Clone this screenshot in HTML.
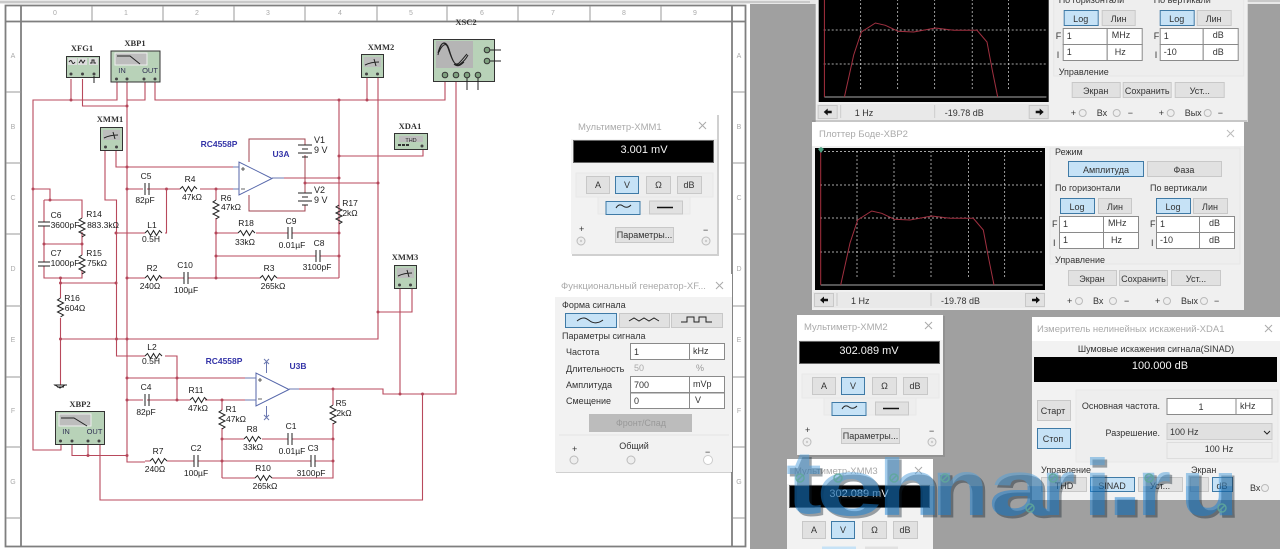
<!DOCTYPE html>
<html><head><meta charset="utf-8"><title>Multisim</title>
<style>
html,body{margin:0;padding:0;background:#a0a0a0;width:1280px;height:549px;overflow:hidden}
svg{display:block;filter:blur(.35px);width:1280px;height:549px;overflow:hidden}
text{font-family:"Liberation Sans","DejaVu Sans",sans-serif;fill:#222}
.w{fill:none;stroke:#b8495c;stroke-width:1.1}
.k{fill:none;stroke:#222;stroke-width:1}
.l{font-size:8.5px;text-anchor:middle;fill:#1a1a1a}
.n{font-family:"Liberation Serif",serif;font-size:8.5px;font-weight:bold;text-anchor:middle;fill:#333}
.b{font-size:8.5px;font-weight:bold;fill:#3434a8;text-anchor:middle}
.d{fill:#b5475a}
.ins{fill:#b8d2b8;stroke:#333;stroke-width:1}
.scr{fill:#bdbdbd}
.p{font-size:9px;fill:#333}
.t{font-size:9.5px;fill:#aaa}
.c{text-anchor:middle}
.btn{fill:#e1e1e1;stroke:#c8c8c8}
.on{fill:#c6e2f6;stroke:#3f7aa6}
.fld{fill:#fff;stroke:#8a8a8a}
.tick{font-size:7px;fill:#aaa;text-anchor:middle}
.g{stroke:#ddd;stroke-width:.7;stroke-dasharray:2 2;fill:none}
.term{fill:#eee;stroke:#bbb}
.wm{font-size:80px;font-weight:bold}
</style></head>
<body>
<svg width="1280" height="549" viewBox="0 0 1280 549" xmlns="http://www.w3.org/2000/svg">
<defs>
<linearGradient id="wg" gradientUnits="userSpaceOnUse" x1="0" y1="450" x2="0" y2="515">
  <stop offset="0" stop-color="#4f9fdc"/><stop offset=".55" stop-color="#4f9fdc"/><stop offset=".56" stop-color="#1680d5"/><stop offset="1" stop-color="#1680d5"/>
</linearGradient>
<g id="rh"><path class="k" d="M0 0l2.500-2.500 3 5 3-5 3 5 3-5 2.500 2.500" stroke-width=".8"/></g>
<g id="rv"><path class="k" d="M0 0l-3 2 6 3-6 3 6 3-6 3 6 3-3 2"/></g>
<g id="ch"><path class="k" stroke-width="1.300" d="M-2 -6v12M2 -6v12"/></g>
<g id="cv"><path class="k" stroke-width="1.300" d="M-6 -2h12M-6 2h12"/></g>
<g id="bat"><path class="k" d="M-7 0h14M-3 4h6M-7 8h14M-3 12h6"/></g>
<g id="mm">
  <rect x="1" y="1" width="147" height="141" fill="#777" opacity=".35"/>
  <rect x="0" y="0" width="146" height="140" fill="#f2f2f2"/>
  <rect x="0" y="0" width="146" height="25" fill="#fff"/>
  <rect x="2.500" y="26.500" width="140" height="22" fill="#000" stroke="#666"/>
  <rect x="5" y="59" width="137" height="24" fill="#eeeeee" stroke="#e8e8e8"/>
  <rect x="27" y="83" width="92" height="17" fill="#eeeeee" stroke="#e8e8e8"/>
  <rect class="btn" x="15.500" y="62.500" width="23" height="17"/>
  <rect class="on" x="44.500" y="62.500" width="23" height="17"/>
  <rect class="btn" x="75.500" y="62.500" width="24" height="17"/>
  <rect class="btn" x="106.500" y="62.500" width="24" height="17"/>
  <text class="p c" x="27" y="74">A</text><text class="p c" x="56" y="74">V</text><text class="p c" x="87.500" y="74">Ω</text><text class="p c" x="118" y="74">dB</text>
  <rect class="on" x="35" y="87.500" width="34" height="13"/>
  <rect class="btn" x="78.500" y="87" width="33" height="13"/>
  <path class="k" d="M45 94q3-5 7-2t8-1"/>
  <path d="M86 93.500h16" stroke="#111" stroke-width="1.500"/>
  <rect class="btn" x="44.500" y="113.500" width="58" height="15"/>
  <text class="p c" x="73.500" y="124">Параметры...</text>
  <text class="p" x="8" y="118">+</text><text class="p" x="132" y="119">−</text>
  <circle class="term" cx="10" cy="127" r="4"/><circle class="term" cx="135" cy="127" r="4"/>
  <circle cx="10" cy="127" r="1.200" fill="#ccc"/><circle cx="135" cy="127" r="1.200" fill="#ccc"/>
</g>
<g id="bode">
  <rect x="0" y="0" width="432" height="188" fill="#f0f0f0"/>
  <rect x="0" y="0" width="432" height="24" fill="#fff"/>
  <rect x="3" y="26" width="230" height="142" fill="#000"/>
  <path class="g" d="M45 29v127M82 29v127M119 29v127M156.500 29v127M192.700 29v127M8 29.600h223M8 63h223M8 96h223M8 130h223"/>
  <path d="M8.700 163h222" stroke="#aaa" stroke-width="1"/>
  <path d="M8.700 28v135" stroke="#a8303f" stroke-width="1"/>
  <path d="M28.700 163L38 121 45.700 98 59.700 89 69.700 91.300 82.300 97.300 98 98 119.700 94 138 96.300 161.300 96.300 171.300 108 176.300 134.700 182 163" fill="none" stroke="#a03040"/>
  <rect x="1" y="170" width="232" height="16" fill="#e9e9e9"/>
  <rect class="btn" x="2.500" y="171.500" width="19" height="13"/>
  <rect class="btn" x="213.500" y="171.500" width="19" height="13"/>
  <path d="M8 178l4-3.500v2.200h4v2.600h-4v2.200zM228 178l-4-3.500v2.200h-4v2.600h4v2.200z" fill="#111"/>
  <path d="M25 171v13M119 171v13" stroke="#ccc"/>
  <text class="p" x="39" y="182">1  Hz</text>
  <text class="p" x="129" y="182">-19.78 dB</text>
  <rect x="238" y="26" width="190" height="116" fill="#eeeeee" stroke="#e6e6e6"/>
  <text class="p" x="243" y="33">Режим</text>
  <rect class="on" x="256.500" y="39.500" width="75" height="15"/>
  <rect class="btn" x="335.500" y="39.500" width="74" height="15"/>
  <text class="p c" x="294" y="51">Амплитуда</text><text class="p c" x="372" y="51">Фаза</text>
  <text class="p" x="243" y="69">По горизонтали</text><text class="p" x="338" y="69">По вертикали</text>
  <rect class="on" x="248.500" y="76.500" width="34" height="15"/><rect class="btn" x="286.500" y="76.500" width="33" height="15"/>
  <rect class="on" x="344.500" y="76.500" width="34" height="15"/><rect class="btn" x="381.500" y="76.500" width="34" height="15"/>
  <text class="p c" x="265" y="88">Log</text><text class="p c" x="303" y="88">Лин</text><text class="p c" x="361" y="88">Log</text><text class="p c" x="398" y="88">Лин</text>
  <rect class="fld" x="247.500" y="94.500" width="44" height="16"/><rect class="fld" x="291.500" y="94.500" width="35" height="16"/>
  <rect class="fld" x="247.500" y="110.500" width="44" height="16"/><rect class="fld" x="291.500" y="110.500" width="35" height="16"/>
  <rect class="fld" x="344.500" y="94.500" width="43" height="16"/><rect class="fld" x="387.500" y="94.500" width="35" height="16"/>
  <rect class="fld" x="344.500" y="110.500" width="43" height="16"/><rect class="fld" x="387.500" y="110.500" width="35" height="16"/>
  <text class="p" x="240" y="105">F</text><text class="p" x="241" y="124">I</text><text class="p" x="338" y="105">F</text><text class="p" x="339" y="124">I</text>
  <text class="p" x="251" y="105">1</text><text class="p" x="296" y="104">MHz</text><text class="p" x="251" y="121">1</text><text class="p" x="299" y="121">Hz</text>
  <text class="p" x="348" y="105">1</text><text class="p" x="397" y="104">dB</text><text class="p" x="348" y="121">-10</text><text class="p" x="397" y="121">dB</text>
  <text class="p" x="243" y="141">Управление</text>
  <rect class="btn" x="256.500" y="148.500" width="48" height="15"/><rect class="btn" x="307.500" y="148.500" width="48" height="15"/><rect class="btn" x="359.500" y="148.500" width="49" height="15"/>
  <text class="p c" x="280" y="160">Экран</text><text class="p c" x="331.500" y="160">Сохранить</text><text class="p c" x="384" y="160">Уст...</text>
  <text class="p" x="255" y="182">+</text><text class="p" x="281" y="182">Вх</text><text class="p" x="312" y="182">−</text>
  <text class="p" x="343" y="182">+</text><text class="p" x="369" y="182">Вых</text><text class="p" x="402" y="182">−</text>
  <circle class="term" cx="267" cy="179" r="3.500"/><circle class="term" cx="301" cy="179" r="3.500"/><circle class="term" cx="355" cy="179" r="3.500"/><circle class="term" cx="392" cy="179" r="3.500"/>
</g>
<g id="mmi">
  <rect class="ins" x=".5" y=".5" width="22" height="23"/>
  <rect x="3" y="3" width="17" height="10" class="scr"/>
  <path class="k" d="M4 11q6-3 14-3M13 5l2 7"/>
  <circle cx="5.500" cy="20" r="1.500" fill="#444"/><circle cx="16.500" cy="20" r="1.500" fill="#444"/>
</g>
</defs>

<!-- sheet -->
<rect x="0" y="0" width="750" height="549" fill="#fff"/>
<rect x="0" y="0" width="1280" height="4" fill="#e8e8e8"/>
<path d="M0 2h810M1247 1h33" stroke="#aaa"/>
<path d="M5.500 5.500H745.500V546.500H5.500ZM21 6V546M732 6V546M6 21.500H745" fill="none" stroke="#7f7f7f" stroke-width="1.800"/>
<path d="M92 6v15M163 6v15M234 6v15M305 6v15M377 6v15M447 6v15M518 6v15M590 6v15M661 6v15M6 92h15M6 163h15M6 234h15M6 306h15M6 377h15M6 447h15M6 518h15M733 92h12M733 163h12M733 234h12M733 306h12M733 377h12M733 447h12M733 518h12" stroke="#999"/>
<g>
<text class="tick" x="55" y="15">0</text><text class="tick" x="126" y="15">1</text><text class="tick" x="197" y="15">2</text><text class="tick" x="268" y="15">3</text><text class="tick" x="340" y="15">4</text><text class="tick" x="411" y="15">5</text><text class="tick" x="482" y="15">6</text><text class="tick" x="553" y="15">7</text><text class="tick" x="624" y="15">8</text><text class="tick" x="695" y="15">9</text>
<text class="tick" x="13" y="58">A</text><text class="tick" x="13" y="129">B</text><text class="tick" x="13" y="200">C</text><text class="tick" x="13" y="271">D</text><text class="tick" x="13" y="342">E</text><text class="tick" x="13" y="413">F</text><text class="tick" x="13" y="484">G</text>
<text class="tick" x="739" y="58">A</text><text class="tick" x="739" y="129">B</text><text class="tick" x="739" y="200">C</text><text class="tick" x="739" y="271">D</text><text class="tick" x="739" y="342">E</text><text class="tick" x="739" y="413">F</text><text class="tick" x="739" y="484">G</text>
</g>

<!-- wires -->
<path class="w" d="M117 79V100H33V450H61V442M71 79V100M82.500 79V106H127M145 79V100H127M127 79V462H145M155 79V100H445V80M367 75V100M378 75V339H60M339 100V278M339 156H423V147M272 178H339M305 183H378M116 148V167H239M105 145V200H116.500V356H145M165 356H177V400M127 189H143M147 189H180M200 189H239M166.500 189V233H165M145 233H116M216 189V200M216 218V278M216 233H238M256 233H288M292 233H339M216 256H316M320 256H339M127 278H145M160 278H184M188 278H260M277 278H339M33 189H50V200M44 200H82V218M44 200V222M44 226V262M44 266V278H82V270M82 232V255M44 244H82M60.500 278V298M60 283H116M60.500 318V385M378 312H412V288M400 288V394M289 389H383V394H456V80M422.500 394V500H100V442M72 442V455.500H127M88 442V456M127 378H256M127 400H143M147 400H190M205 400H256M222 400V410M222 428V478M222 439H244M262 439H288M292 439H333M145 461H150M167 461H194M198 461H311M315 461H333M222 478H255M272 478H333V423M333 405V389"/>
<path d="M249 162V139H305V145M305 155V193M305 205V211H249V195" fill="none" stroke="#a0434f"/>
<g class="d">
<circle cx="71" cy="100" r="1.500"/><circle cx="127" cy="106" r="1.500"/><circle cx="339" cy="100" r="1.500"/><circle cx="367" cy="100" r="1.500"/><circle cx="127" cy="167" r="1.500"/><circle cx="127" cy="189" r="1.500"/><circle cx="166.500" cy="189" r="1.500"/><circle cx="216" cy="189" r="1.500"/><circle cx="339" cy="156" r="1.500"/><circle cx="339" cy="178" r="1.500"/><circle cx="305" cy="183" r="1.500"/><circle cx="378" cy="183" r="1.500"/><circle cx="216" cy="233" r="1.500"/><circle cx="339" cy="233" r="1.500"/><circle cx="216" cy="256" r="1.500"/><circle cx="339" cy="256" r="1.500"/><circle cx="216" cy="278" r="1.500"/><circle cx="127" cy="278" r="1.500"/><circle cx="116" cy="233" r="1.500"/><circle cx="116" cy="283" r="1.500"/><circle cx="33" cy="189" r="1.500"/><circle cx="50" cy="200" r="1.500"/><circle cx="44" cy="244" r="1.500"/><circle cx="82" cy="244" r="1.500"/><circle cx="60.500" cy="278" r="1.500"/><circle cx="60.500" cy="283" r="1.500"/><circle cx="60.500" cy="339" r="1.500"/><circle cx="116.500" cy="339" r="1.500"/><circle cx="127" cy="339" r="1.500"/><circle cx="378" cy="312" r="1.500"/><circle cx="127" cy="378" r="1.500"/><circle cx="127" cy="400" r="1.500"/><circle cx="177" cy="378" r="1.500"/><circle cx="177" cy="400" r="1.500"/><circle cx="222" cy="400" r="1.500"/><circle cx="333" cy="389" r="1.500"/><circle cx="222" cy="439" r="1.500"/><circle cx="333" cy="439" r="1.500"/><circle cx="222" cy="461" r="1.500"/><circle cx="333" cy="461" r="1.500"/><circle cx="88" cy="455.500" r="1.500"/><circle cx="127" cy="455.500" r="1.500"/><circle cx="400" cy="394" r="1.500"/><circle cx="422.500" cy="394" r="1.500"/>
</g>
<path d="M60 385h-5l5 3 5-3zM54 385h13M57 387h7" class="k"/>

<!-- passive parts -->
<use href="#rh" x="180" y="189"/><use href="#rh" x="145" y="233"/><use href="#rh" x="238" y="233"/><use href="#rh" x="145" y="278"/><use href="#rh" x="260" y="278"/><use href="#rh" x="145" y="356"/><use href="#rh" x="190" y="400"/><use href="#rh" x="244" y="439"/><use href="#rh" x="150" y="461"/><use href="#rh" x="255" y="478"/>
<use href="#rv" x="216" y="200"/><use href="#rv" x="339" y="205"/><use href="#rv" x="82" y="218"/><use href="#rv" x="82" y="255"/><use href="#rv" x="60.500" y="298"/><use href="#rv" x="222" y="410"/><use href="#rv" x="333" y="405"/>
<use href="#ch" x="147" y="189"/><use href="#ch" x="290" y="233"/><use href="#ch" x="318" y="256"/><use href="#ch" x="186" y="278"/><use href="#ch" x="147" y="400"/><use href="#ch" x="290" y="439"/><use href="#ch" x="196" y="461"/><use href="#ch" x="313" y="461"/>
<use href="#cv" x="44" y="224"/><use href="#cv" x="44" y="264"/>
<use href="#bat" x="305" y="145"/><use href="#bat" x="305" y="193"/>

<!-- op amps -->
<path d="M239 162V195L272 178.500ZM256 373V406L289 389.500Z" fill="#fff" stroke="#5566aa"/>
<path d="M241 169h4M243 167v4M241 189h4M258 380h4M260 378v4M258 399h4" stroke="#333" fill="none" stroke-width=".8"/>
<path d="M272 178h12M289 389h10M233 167h6M233 189h6M245 378h11M245 400h11" stroke="#6b78b0" fill="none"/>
<path d="M266.500 373V362M266.500 406V418M264 359l5 5m0-5l-5 5M264 415l5 5m0-5l-5 5" stroke="#6b78b0" fill="none"/>

<!-- instruments -->
<rect class="ins" x="66.500" y="56.500" width="33" height="21"/>
<rect x="68" y="58" width="9" height="7" fill="#ddd"/><rect x="78" y="58" width="9" height="7" fill="#ddd"/><rect x="89" y="58" width="9" height="7" fill="#ddd"/>
<path class="k" stroke-width=".6" d="M69 62q2-3 3 0t3 0M79 63l2-3 2 3 2-3M90 63h2v-3h2v3h2"/>
<circle cx="71" cy="74" r="1.500" fill="#444"/><circle cx="82.500" cy="74" r="1.500" fill="#444"/><circle cx="94" cy="74" r="1.500" fill="#444"/>
<path class="k" d="M94 76v7"/>
<rect class="ins" x="111" y="51" width="49" height="31"/>
<rect x="115" y="53" width="32" height="12" fill="#bdbdbd" stroke="#eee"/>
<path class="k" d="M117 56h13l10 8"/>
<text x="122" y="73" class="c" style="font-size:7.500px;fill:#335">IN</text><text x="150" y="73" class="c" style="font-size:7.500px;fill:#335">OUT</text>
<circle cx="116.500" cy="79" r="1.500" fill="#444"/><circle cx="127" cy="79" r="1.500" fill="#444"/><circle cx="144" cy="79" r="1.500" fill="#444"/><circle cx="155" cy="79" r="1.500" fill="#444"/>
<use href="#mmi" x="361" y="54"/><use href="#mmi" x="100" y="127"/><use href="#mmi" x="394" y="265"/>
<rect class="ins" x="394.500" y="133.500" width="33" height="16"/>
<rect x="399" y="136" width="24" height="6" fill="#bdbdbd"/>
<text x="411" y="142" class="c" style="font-size:5.500px">THD</text>
<path d="M398 145h3M402 145h3M406 145h3" stroke="#333" stroke-width="2"/><circle cx="422" cy="146" r="1.500" fill="#444"/>
<rect class="ins" x="433.500" y="39.500" width="61" height="42"/>
<rect x="436" y="41" width="37" height="27" fill="#b5b5b5"/>
<path class="k" stroke-width=".8" d="M438 53c3-12 7-12 10-5 4 12 7 20 12 14 3-3 5-6 7-8M438 55c3-15 8-15 11-6 4 14 7 18 11 15 3-2 6-5 8-9M439 52c3-7 6-9 9-6M454 64c3 3 6 2 10-2"/>
<g fill="#7ea07e" stroke="#333"><circle cx="445" cy="75" r="2.800"/><circle cx="456" cy="75" r="2.800"/><circle cx="467" cy="75" r="2.800"/><circle cx="478" cy="75" r="2.800"/><circle cx="487" cy="50" r="2.800"/><circle cx="487" cy="61" r="2.800"/></g>
<path class="k" d="M490 50h11M490 61h11M467 78v12M478 78v12"/>
<rect class="ins" x="55.500" y="411.500" width="49" height="33"/>
<rect x="59" y="414" width="32" height="12" fill="#bdbdbd" stroke="#eee"/>
<path class="k" d="M61 418h13l13 8"/>
<text x="66" y="434" class="c" style="font-size:7.500px;fill:#335">IN</text><text x="94.500" y="434" class="c" style="font-size:7.500px;fill:#335">OUT</text>
<circle cx="60.500" cy="441" r="1.500" fill="#444"/><circle cx="72" cy="441" r="1.500" fill="#444"/><circle cx="88" cy="441" r="1.500" fill="#444"/><circle cx="99" cy="441" r="1.500" fill="#444"/>

<!-- schematic text -->
<g>
<text class="n" x="82" y="51">XFG1</text><text class="n" x="135" y="46">XBP1</text><text class="n" x="381" y="50">XMM2</text><text class="n" x="110" y="122">XMM1</text><text class="n" x="410" y="129">XDA1</text><text class="n" x="466" y="25">XSC2</text><text class="n" x="405" y="260">XMM3</text><text class="n" x="80" y="407">XBP2</text>
<text class="b" x="219" y="147">RC4558P</text><text class="b" x="281" y="157">U3A</text><text class="b" x="224" y="364">RC4558P</text><text class="b" x="298" y="369">U3B</text>
<text class="l" x="146" y="179">C5</text><text class="l" x="145" y="203">82pF</text><text class="l" x="190" y="182">R4</text><text class="l" x="192" y="200">47kΩ</text><text class="l" x="226" y="201">R6</text><text class="l" x="231" y="210">47kΩ</text>
<text class="l" x="152" y="228">L1</text><text class="l" x="151" y="242">0.5H</text><text class="l" x="246" y="226">R18</text><text class="l" x="245" y="245">33kΩ</text><text class="l" x="291" y="224">C9</text><text class="l" x="292" y="248">0.01µF</text><text class="l" x="319" y="246">C8</text><text class="l" x="317" y="270">3100pF</text>
<text class="l" x="152" y="271">R2</text><text class="l" x="150" y="289">240Ω</text><text class="l" x="185" y="268">C10</text><text class="l" x="186" y="293">100µF</text><text class="l" x="269" y="271">R3</text><text class="l" x="273" y="289">265kΩ</text>
<text class="l" x="350" y="206">R17</text><text class="l" x="350" y="216">2kΩ</text><text x="314" y="143" style="font-size:9px">V1</text><text x="314" y="153" style="font-size:9px">9 V</text><text x="314" y="193" style="font-size:9px">V2</text><text x="314" y="203" style="font-size:9px">9 V</text>
<text class="l" x="56" y="218">C6</text><text class="l" x="65" y="228">3600pF</text><text class="l" x="94" y="217">R14</text><text class="l" x="103" y="228">883.3kΩ</text><text class="l" x="56" y="256">C7</text><text class="l" x="65" y="266">1000pF</text><text class="l" x="94" y="256">R15</text><text class="l" x="97" y="266">75kΩ</text>
<text class="l" x="72" y="301">R16</text><text class="l" x="75" y="311">604Ω</text>
<text class="l" x="152" y="350">L2</text><text class="l" x="151" y="364">0.5H</text><text class="l" x="146" y="390">C4</text><text class="l" x="146" y="415">82pF</text><text class="l" x="196" y="393">R11</text><text class="l" x="198" y="411">47kΩ</text><text class="l" x="231" y="412">R1</text><text class="l" x="236" y="422">47kΩ</text>
<text class="l" x="252" y="432">R8</text><text class="l" x="253" y="450">33kΩ</text><text class="l" x="291" y="429">C1</text><text class="l" x="292" y="454">0.01µF</text><text class="l" x="313" y="451">C3</text><text class="l" x="311" y="476">3100pF</text><text class="l" x="341" y="406">R5</text><text class="l" x="344" y="416">2kΩ</text>
<text class="l" x="158" y="454">R7</text><text class="l" x="155" y="472">240Ω</text><text class="l" x="196" y="451">C2</text><text class="l" x="196" y="476">100µF</text><text class="l" x="263" y="471">R10</text><text class="l" x="265" y="489">265kΩ</text>
</g>

<!-- multimeter 1 -->
<use href="#mm" x="571" y="114"/>
<text class="t" x="578" y="130">Мультиметр-XMM1</text><path d="M699 122l7 7m0-7l-7 7" stroke="#aaa" fill="none"/>
<text x="644" y="153" class="c" style="font-size:11px;fill:#f4f4f4">3.001 mV</text>

<!-- function generator -->
<rect x="556" y="275" width="177" height="198" fill="#777" opacity=".35"/>
<rect x="555" y="274" width="177" height="198" fill="#f2f2f2"/>
<rect x="555" y="274" width="177" height="23" fill="#fff"/>
<text class="t" x="561" y="289">Функциональный генератор-XF...</text><path d="M716 282l7 7m0-7l-7 7" stroke="#aaa" fill="none"/>
<text class="p" x="562" y="308">Форма сигнала</text>
<rect class="on" x="565.500" y="313.500" width="51" height="14"/><rect class="btn" x="619.500" y="313.500" width="50" height="14"/><rect class="btn" x="671.500" y="313.500" width="51" height="14"/>
<path class="k" d="M577 321c6-5 9-3 13 0s9 2 13-1M629 321l5-3 5 3 5-3 5 3 5-3 5 3" stroke-width=".7"/>
<path class="k" stroke-width=".8" d="M681 322h6v-5h7v5h5v-5h7v5h6"/>
<text class="p" x="562" y="339">Параметры сигнала</text>
<text class="p" x="566" y="355">Частота</text><text class="p" x="566" y="372">Длительность</text><text class="p" x="566" y="388">Амплитуда</text><text class="p" x="566" y="404">Смещение</text>
<rect class="fld" x="630.500" y="343.500" width="59" height="16"/><rect class="fld" x="689.500" y="343.500" width="35" height="16"/>
<rect class="fld" x="630.500" y="376.500" width="59" height="16"/><rect class="fld" x="689.500" y="376.500" width="35" height="16"/>
<rect class="fld" x="630.500" y="393" width="59" height="15.500"/><rect class="fld" x="689.500" y="393" width="35" height="15.500"/>
<text class="p" x="634" y="355">1</text><text class="p" x="693" y="354">kHz</text>
<text class="p" x="634" y="371" style="fill:#aaa">50</text><text class="p" x="696" y="371" style="fill:#999">%</text>
<text class="p" x="634" y="388">700</text><text class="p" x="693" y="387">mVp</text><text class="p" x="634" y="404">0</text><text class="p" x="695" y="403">V</text>
<rect x="589" y="414" width="103" height="18" fill="#bcbcbc"/><text class="p c" x="641" y="426" style="fill:#999">Фронт/Спад</text>
<path d="M559 435h170" stroke="#e4e4e4"/>
<text class="p c" x="634" y="449">Общий</text><text class="p" x="572" y="452">+</text><text class="p" x="705" y="455">−</text>
<circle class="term" cx="574" cy="460" r="4"/><circle class="term" cx="631" cy="460" r="4"/><circle cx="708" cy="460" r="4.500" fill="#fff" stroke="#ccc"/>

<!-- bode -->
<use href="#bode" x="815.700" y="-66"/>
<rect x="812" y="120" width="435" height="2.500" fill="#8a8a8a" opacity=".4"/>
<use href="#bode" x="812" y="122"/>
<text class="t" x="819" y="137">Плоттер Боде-XBP2</text><path d="M1227 130l7 7m0-7l-7 7" stroke="#bbb" fill="none"/>
<path d="M821 147l-3 2 3 4 3-4z" fill="#4aa080"/>

<!-- multimeter 2 -->
<use href="#mm" x="797" y="315"/>
<text class="t" x="804" y="330">Мультиметр-XMM2</text><path d="M925 322l7 7m0-7l-7 7" stroke="#aaa" fill="none"/>
<text x="869" y="354" class="c" style="font-size:11px;fill:#f4f4f4">302.089 mV</text>

<!-- multimeter 3 (cut off by the frame) -->
<rect x="787" y="459" width="146" height="90" fill="#f2f2f2"/>
<rect x="787" y="459" width="146" height="25" fill="#fff"/>
<rect x="789.500" y="485.500" width="140" height="22" fill="#000" stroke="#666"/>
<rect class="btn" x="802.500" y="521.500" width="23" height="17"/><rect class="on" x="831.500" y="521.500" width="23" height="17"/><rect class="btn" x="862.500" y="521.500" width="24" height="17"/><rect class="btn" x="893.500" y="521.500" width="24" height="17"/>
<text class="p c" x="814" y="533">A</text><text class="p c" x="843" y="533">V</text><text class="p c" x="874.500" y="533">Ω</text><text class="p c" x="905" y="533">dB</text>
<rect x="822" y="546.500" width="34" height="2.500" fill="#c6e2f6"/><rect x="865" y="546.500" width="33" height="2.500" fill="#e1e1e1"/>
<text class="t" x="794" y="474">Мультиметр-XMM3</text><path d="M915 467l7 7m0-7l-7 7" stroke="#aaa" fill="none"/>
<text x="859" y="497" class="c" style="font-size:11px;fill:#f4f4f4">302.089 mV</text>

<!-- distortion analyser -->
<rect x="1032" y="317" width="248" height="183" fill="#f2f2f2"/>
<rect x="1032" y="317" width="248" height="24" fill="#fff"/>
<text class="t" x="1037" y="332">Измеритель нелинейных искажений-XDA1</text><path d="M1265 325l7 7m0-7l-7 7" stroke="#aaa" fill="none"/>
<text class="p c" x="1156" y="352">Шумовые искажения сигнала(SINAD)</text>
<rect x="1034" y="357" width="243" height="25" fill="#000"/>
<text x="1160" y="369" class="c" style="font-size:11px;fill:#f4f4f4">100.000 dB</text>
<rect x="1076" y="390" width="202" height="72" fill="#eeeeee" stroke="#e8e8e8"/>
<rect class="btn" x="1037.500" y="400.500" width="33" height="20"/><rect class="on" x="1037.500" y="428.500" width="33" height="20"/>
<text class="p c" x="1053" y="414">Старт</text><text class="p c" x="1053" y="442">Стоп</text>
<text class="p" x="1160" y="409" text-anchor="end">Основная частота.</text><text class="p" x="1160" y="436" text-anchor="end">Разрешение.</text>
<rect class="fld" x="1167" y="398.500" width="69" height="16"/><rect class="fld" x="1236" y="398.500" width="36" height="16"/>
<text class="p c" x="1201" y="410">1</text><text class="p" x="1240" y="409">kHz</text>
<rect x="1167" y="423.500" width="105" height="16" fill="#e0e0e0" stroke="#ccc"/><text class="p" x="1170" y="435">100 Hz</text><path class="k" d="M1264 431l3 3 3-3" stroke-width=".7"/>
<rect x="1167" y="442.500" width="105" height="16" fill="#eee" stroke="#ddd"/><text class="p c" x="1219" y="452">100 Hz</text>
<text class="p" x="1041" y="473">Управление</text><text class="p" x="1191" y="473">Экран</text>
<rect class="btn" x="1041.500" y="477.500" width="45" height="14"/><rect class="on" x="1090.500" y="477.500" width="44" height="14"/><rect class="btn" x="1138.500" y="477.500" width="44" height="14"/><rect class="btn" x="1190.500" y="477.500" width="18" height="14"/><rect class="on" x="1212.500" y="477.500" width="20" height="14"/>
<text class="p c" x="1064" y="489">THD</text><text class="p c" x="1112" y="489">SINAD</text><text class="p c" x="1160" y="489">Уст...</text><text class="p c" x="1222" y="489">dB</text><text class="p" x="1250" y="491">Вх</text>
<circle class="term" cx="1265" cy="488" r="3.500"/>

<!-- watermark: tehnari.ru -->
<g transform="translate(2.500 2.500)" opacity=".4" style="--x:0">
<text class="wm" x="786" y="513" textLength="36" lengthAdjust="spacingAndGlyphs" style="font-size:90px;fill:#10202c">t</text>
<text class="wm" x="816" y="515" textLength="68" lengthAdjust="spacingAndGlyphs" style="fill:#10202c">e</text>
<text class="wm" x="877.700" y="515" textLength="63.600" lengthAdjust="spacingAndGlyphs" style="fill:#10202c">h</text>
<text class="wm" x="931.500" y="515" textLength="57" lengthAdjust="spacingAndGlyphs" style="fill:#10202c">n</text>
<text class="wm" x="988.600" y="515" textLength="61.600" lengthAdjust="spacingAndGlyphs" style="fill:#10202c">a</text>
<text class="wm" x="1041" y="515" textLength="34" lengthAdjust="spacingAndGlyphs" style="fill:#10202c">r</text>
<text class="wm" x="1082.500" y="515" textLength="29.800" lengthAdjust="spacingAndGlyphs" style="fill:#10202c">i</text>
<text class="wm" x="1105" y="515" textLength="40" lengthAdjust="spacingAndGlyphs" style="font-size:120px;fill:#10202c">.</text>
<text class="wm" x="1137" y="515" textLength="34" lengthAdjust="spacingAndGlyphs" style="fill:#10202c">r</text>
<text class="wm" x="1180" y="515" textLength="58.700" lengthAdjust="spacingAndGlyphs" style="fill:#10202c">u</text>
</g>
<g opacity=".5">
<text class="wm" x="786" y="513" textLength="36" lengthAdjust="spacingAndGlyphs" style="font-size:90px;fill:url(#wg)">t</text>
<text class="wm" x="816" y="515" textLength="68" lengthAdjust="spacingAndGlyphs" style="fill:url(#wg)">e</text>
<text class="wm" x="877.700" y="515" textLength="63.600" lengthAdjust="spacingAndGlyphs" style="fill:url(#wg)">h</text>
<text class="wm" x="931.500" y="515" textLength="57" lengthAdjust="spacingAndGlyphs" style="fill:url(#wg)">n</text>
<text class="wm" x="988.600" y="515" textLength="61.600" lengthAdjust="spacingAndGlyphs" style="fill:url(#wg)">a</text>
<text class="wm" x="1041" y="515" textLength="34" lengthAdjust="spacingAndGlyphs" style="fill:url(#wg)">r</text>
<text class="wm" x="1082.500" y="515" textLength="29.800" lengthAdjust="spacingAndGlyphs" style="fill:url(#wg)">i</text>
<text class="wm" x="1105" y="515" textLength="40" lengthAdjust="spacingAndGlyphs" style="font-size:120px;fill:url(#wg)">.</text>
<text class="wm" x="1137" y="515" textLength="34" lengthAdjust="spacingAndGlyphs" style="fill:url(#wg)">r</text>
<text class="wm" x="1180" y="515" textLength="58.700" lengthAdjust="spacingAndGlyphs" style="fill:url(#wg)">u</text>
</g>
<g fill="none" stroke="#5fa89a" stroke-width="1.500" opacity=".85">
<path d="M796 478a4 4 0 1 0 8 0a4 4 0 1 0-8 0M797 481l6-6"/><path d="M834 478a4 4 0 1 0 8 0a4 4 0 1 0-8 0M835 481l6-6"/><path d="M890 478a4 4 0 1 0 8 0a4 4 0 1 0-8 0M891 481l6-6"/><path d="M941 478a4 4 0 1 0 8 0a4 4 0 1 0-8 0M942 481l6-6"/><path d="M1026 508a4 4 0 1 0 8 0a4 4 0 1 0-8 0M1027 511l6-6"/><path d="M1049 478a4 4 0 1 0 8 0a4 4 0 1 0-8 0M1050 481l6-6"/><path d="M1145 478a4 4 0 1 0 8 0a4 4 0 1 0-8 0M1146 481l6-6"/><path d="M1218 508a4 4 0 1 0 8 0a4 4 0 1 0-8 0M1219 511l6-6"/>
</g>
</svg>
</body></html>
